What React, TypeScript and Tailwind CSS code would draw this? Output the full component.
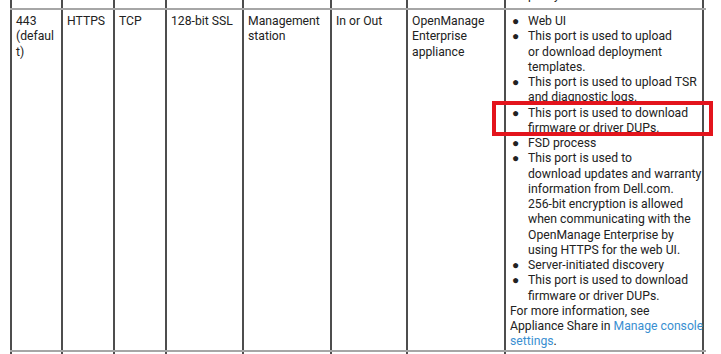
const cols = "grid-cols-[51px_52px_52px_77px_88px_76px_98px_200px]";

function Bullet({ children }: { children: React.ReactNode }) {
  return (
    <li className="flex">
      <span className="w-[18px] shrink-0 pl-[2px] text-[12px]">●</span>
      <span>{children}</span>
    </li>
  );
}

export default function App() {
  const cell = "border-l-2 border-[#4d4d4d] px-[4px] pt-[4px] whitespace-nowrap";
  return (
    <div
      className="relative w-[721px] h-[354px] overflow-hidden bg-white text-[#222] text-[12.2px] leading-[15.25px]"
      style={{ fontFamily: "Roboto, 'Liberation Sans', sans-serif" }}
    >
      <div className="ml-[10px] w-[696px]">
        {/* previous row, cut off */}
        <div className={`grid ${cols} h-[8px] overflow-hidden`}>
          {[0, 1, 2, 3, 4, 5, 6].map((i) => (
            <div key={i} className="border-l-2 border-[#4d4d4d]" />
          ))}
          <div className="border-x-2 border-[#4d4d4d] pl-[22px]">
            <div className="-mt-[12px]">policy.</div>
          </div>
        </div>
        <div className="h-[2px] bg-[#a6a6a6]" />
        <div className={`grid ${cols} h-[340px]`}>
          <div className={cell}>
            443
            <br />
            (defaul
            <br />
            t)
          </div>
          <div className={cell}>HTTPS</div>
          <div className={cell}>TCP</div>
          <div className={cell}>128-bit SSL</div>
          <div className={cell}>
            Management
            <br />
            station
          </div>
          <div className={cell}>In or Out</div>
          <div className={cell}>
            OpenManage
            <br />
            Enterprise
            <br />
            appliance
          </div>
          <div className={`${cell} border-r-2`}>
            <ul>
              <Bullet>Web UI</Bullet>
              <Bullet>
                This port is used to upload
                <br />
                or download deployment
                <br />
                templates.
              </Bullet>
              <Bullet>
                This port is used to upload TSR
                <br />
                and diagnostic logs.
              </Bullet>
              <Bullet>
                This port is used to download
                <br />
                firmware or driver DUPs.
              </Bullet>
              <Bullet>FSD process</Bullet>
              <Bullet>
                This port is used to
                <br />
                download updates and warranty
                <br />
                information from Dell.com.
                <br />
                256-bit encryption is allowed
                <br />
                when communicating with the
                <br />
                OpenManage Enterprise by
                <br />
                using HTTPS for the web UI.
              </Bullet>
              <Bullet>Server-initiated discovery</Bullet>
              <Bullet>
                This port is used to download
                <br />
                firmware or driver DUPs.
              </Bullet>
            </ul>
            <p>
              For more information, see
              <br />
              Appliance Share in <span className="text-[#3a8fd1]">Manage console</span>
              <br />
              <span className="text-[#3a8fd1]">settings</span>.
            </p>
          </div>
        </div>
        <div className="h-[2px] bg-[#a6a6a6]" />
        <div className={`grid ${cols} h-[10px]`}>
          {[0, 1, 2, 3, 4, 5, 6].map((i) => (
            <div key={i} className="border-l-2 border-[#4d4d4d]" />
          ))}
          <div className="border-x-2 border-[#4d4d4d]" />
        </div>
      </div>
      <div className="absolute left-[492px] top-[101px] w-[221px] h-[35px] border-4 border-[#e3141c]" />
    </div>
  );
}
